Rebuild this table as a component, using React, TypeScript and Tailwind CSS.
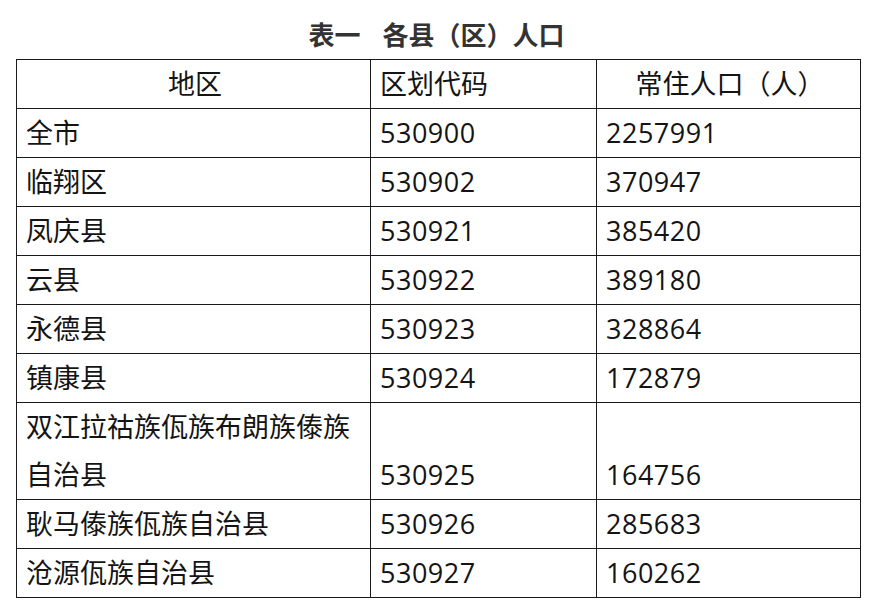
const ROWS: [string, string, string][] = [
  ['全市', '530900', '2257991'],
  ['临翔区', '530902', '370947'],
  ['凤庆县', '530921', '385420'],
  ['云县', '530922', '389180'],
  ['永德县', '530923', '328864'],
  ['镇康县', '530924', '172879'],
  ['双江拉祜族佤族布朗族傣族自治县', '530925', '164756'],
  ['耿马傣族佤族自治县', '530926', '285683'],
  ['沧源佤族自治县', '530927', '160262'],
]

const cell = 'border border-[#1a1a1a] pl-[9px] pr-[6px] align-bottom leading-[48px]'
const num = 'tracking-[0.5px]'

export default function App() {
  return (
    <div className="min-h-[611px] w-[873px] bg-white font-['Open_Sans','Noto_Sans_CJK_SC',sans-serif] text-[#141414]">
      <div className="pt-[20px] text-center text-[26px] font-bold leading-[30px] text-[#333]">
        表一<span className="inline-block w-[22px]" />各县（区）人口
      </div>
      <table className="ml-[16px] mt-[9px] w-[844px] table-fixed border-collapse text-[27px]">
        <colgroup>
          <col className="w-[354px]" />
          <col className="w-[226px]" />
          <col className="w-[264px]" />
        </colgroup>
        <thead>
          <tr>
            <th className={`${cell} text-center font-normal`}>地区</th>
            <th className={`${cell} text-left font-normal`}>区划代码</th>
            <th className={`${cell} text-center font-normal`}>常住人口（人）</th>
          </tr>
        </thead>
        <tbody>
          {ROWS.map(([name, code, pop]) => (
            <tr key={code}>
              <td className={`${cell} text-left`}>{name}</td>
              <td className={`${cell} ${num}`}>{code}</td>
              <td className={`${cell} ${num}`}>{pop}</td>
            </tr>
          ))}
        </tbody>
      </table>
    </div>
  )
}
